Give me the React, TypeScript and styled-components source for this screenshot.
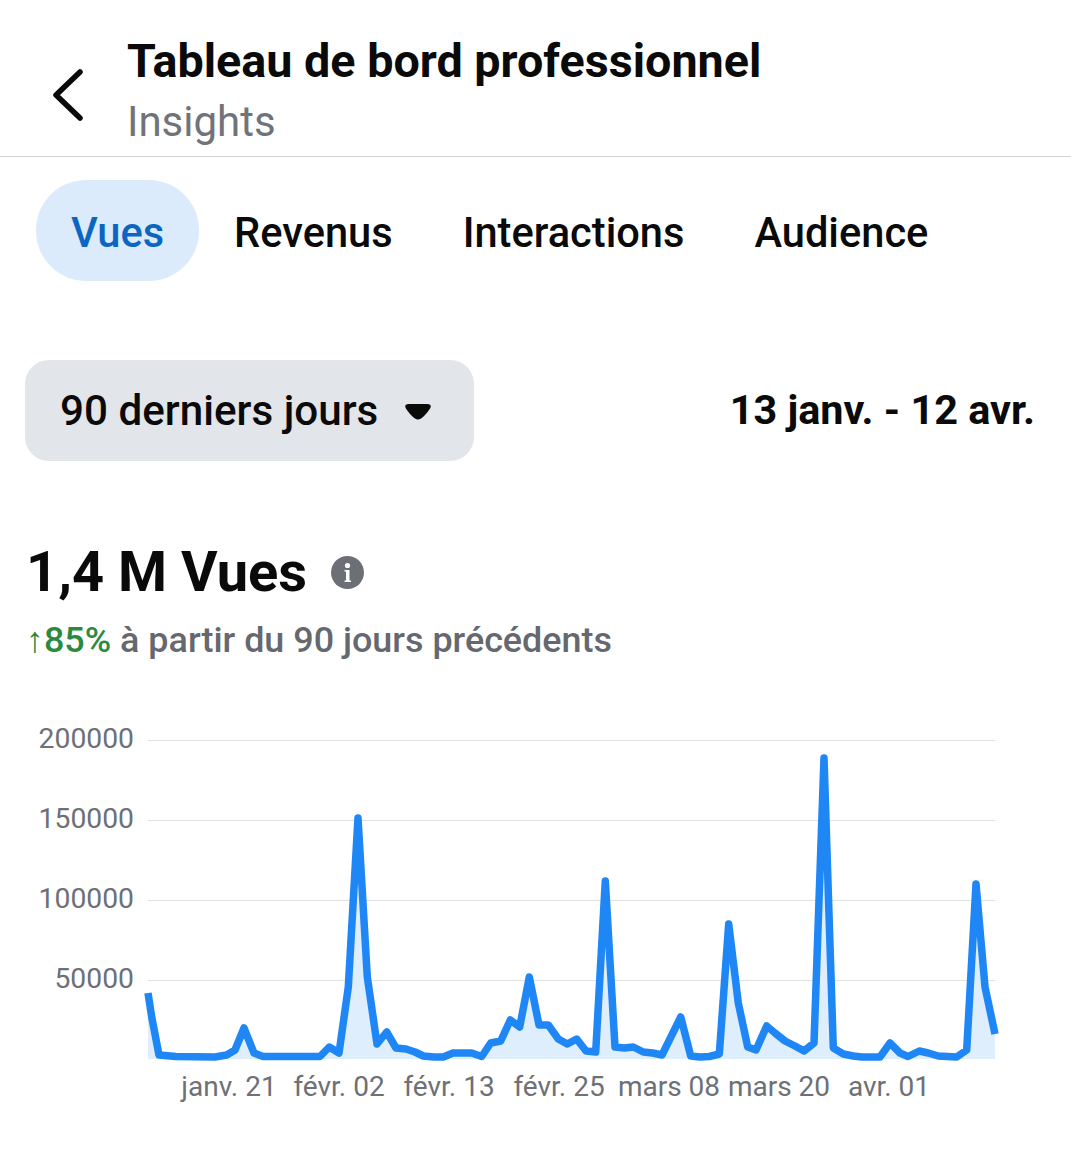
import styled, { createGlobalStyle } from "styled-components";

const GlobalStyle = createGlobalStyle`
  html, body {
    margin: 0;
    padding: 0;
    background: #fff;
    font-family: Roboto, "Liberation Sans", sans-serif;
    color: #0a0a0a;
  }
`;

const Page = styled.div`
  width: 1071px;
  height: 1166px;
  overflow: hidden;
  background: #fff;
`;

const Header = styled.header`
  height: 156px;
  border-bottom: 1px solid #d3d4d6;
  display: flex;
  align-items: flex-start;
  padding-left: 53px;
`;

const BackIcon = styled.svg`
  width: 30px;
  height: 52px;
  margin-top: 69px;
  margin-right: 44px;
  flex-shrink: 0;
`;

const HeaderText = styled.div`
  display: flex;
  flex-direction: column;
  padding-top: 33px;
`;

const Title = styled.h1`
  margin: 0;
  font-size: 46.7px;
  line-height: 57px;
  font-weight: 700;
  white-space: nowrap;
`;

const Subtitle = styled.div`
  font-size: 42px;
  line-height: 63px;
  color: #707379;
`;

const Tabs = styled.nav`
  display: flex;
  padding: 23px 0 0 36px;
`;

const Tab = styled.div<{ $active?: boolean }>`
  height: 101px;
  box-sizing: border-box;
  padding: 3px 35px 0;
  display: flex;
  align-items: center;
  border-radius: 50px;
  font-size: 41.6px;
  font-weight: 500;
  color: ${(props) => (props.$active ? "#0a66c2" : "#0a0a0a")};
  background: ${(props) => (props.$active ? "#dcebfb" : "transparent")};
`;

const FilterRow = styled.div`
  display: flex;
  align-items: center;
  justify-content: space-between;
  padding: 79px 36px 0 25px;
`;

const Dropdown = styled.div`
  width: 449px;
  height: 101px;
  box-sizing: border-box;
  padding-left: 35px;
  display: flex;
  align-items: center;
  gap: 26px;
  border-radius: 24px;
  background: #e2e5ea;
  font-size: 42.2px;
  font-weight: 500;
  white-space: nowrap;
`;

const Caret = styled.svg`
  width: 28px;
  height: 18px;
  margin-top: 3px;
  flex-shrink: 0;
`;

const DateRange = styled.div`
  font-size: 41.4px;
  font-weight: 700;
  margin-top: -2px;
  white-space: nowrap;
`;

const StatRow = styled.div`
  display: flex;
  align-items: center;
  gap: 24px;
  padding: 76px 0 0 26px;
`;

const StatValue = styled.div`
  font-size: 56px;
  line-height: 70px;
  font-weight: 700;
  white-space: nowrap;
`;

const InfoIcon = styled.svg`
  width: 33px;
  height: 33px;
`;

const Trend = styled.div`
  padding: 10px 0 0 26px;
  font-size: 35.9px;
  line-height: 46px;
  font-weight: 500;
  color: #65686e;
  white-space: nowrap;
`;

const TrendUp = styled.span`
  color: #2b8a3e;
`;

const Chart = styled.div`
  display: grid;
  grid-template-columns: 148px 847px;
  padding-top: 77px;
`;

const YAxis = styled.div`
  display: flex;
  flex-direction: column;
  align-items: flex-end;
  padding-right: 14px;
  margin-top: -21px;
`;

const YLabel = styled.div`
  height: 80px;
  line-height: 39px;
  font-size: 28.3px;
  color: #6d7075;
`;

const Plot = styled.svg`
  display: block;
  width: 847px;
  height: 320px;
  overflow: visible;
`;

const XAxis = styled.div`
  grid-column: 1 / 3;
  display: flex;
  padding: 8px 0 0 174px;
`;

const XLabel = styled.div`
  width: 110px;
  font-size: 28px;
  line-height: 38px;
  color: #6d7075;
  white-space: nowrap;
  display: flex;
  justify-content: center;
`;

const tabs = ["Vues", "Revenus", "Interactions", "Audience"];
const yLabels = ["200000", "150000", "100000", "50000"];
const xLabels = ["janv. 21", "févr. 02", "févr. 13", "févr. 25", "mars 08", "mars 20", "avr. 01"];
const gridLines = [740, 820, 900, 980];

// points read off the reference, in page coordinates (see viewBox below)
const points: [number, number][] = [
  [148, 993], [151.7, 1017], [159, 1055], [176, 1056.5], [215, 1057], [226.7, 1055], [235, 1050],
  [244, 1028], [254, 1053], [263, 1056.5], [320, 1056.5], [329.3, 1047], [339, 1053], [348.3, 987],
  [358, 818], [367.3, 977], [377, 1044], [386.7, 1032], [396, 1048], [406, 1049], [415, 1052],
  [423.3, 1056], [434, 1057], [443.3, 1057], [453, 1053], [461.7, 1053], [471.7, 1053], [481.7, 1056.5],
  [490.7, 1043], [500.7, 1041], [510.3, 1020], [519.7, 1027], [529.3, 977], [539, 1025], [548.3, 1025],
  [558.3, 1039], [567.3, 1044], [576.7, 1039], [586, 1051], [595.7, 1052], [605.3, 881], [615, 1047],
  [624.3, 1048], [633.3, 1047], [643.3, 1052], [652.7, 1053], [662, 1055], [680.7, 1017], [690.7, 1056],
  [700, 1057], [709.3, 1056.5], [719.3, 1054], [728.7, 924], [738.3, 1003], [747.7, 1047], [756, 1050],
  [766.7, 1026], [775, 1033], [785, 1041], [795, 1046], [804, 1051], [814, 1043], [824, 758],
  [833.3, 1048], [843.3, 1054], [853.3, 1056], [861.7, 1057], [880, 1057], [890, 1043], [900, 1053],
  [908, 1056.5], [919.3, 1051], [928.3, 1053], [938.3, 1056], [956.7, 1057], [966.7, 1050], [976, 884],
  [985, 987], [995, 1034],
];

const linePoints = points.map((p) => p.join(",")).join(" ");
const areaPoints = `148,1059 ${linePoints} 995,1059`;

function App() {
  return (
    <Page>
      <GlobalStyle />
      <Header>
        <BackIcon viewBox="0 0 30 52">
          <path
            d="M27 3 L3 26 L27 49"
            fill="none"
            stroke="#0a0a0a"
            strokeWidth="5.5"
            strokeLinecap="round"
            strokeLinejoin="round"
          />
        </BackIcon>
        <HeaderText>
          <Title>Tableau de bord professionnel</Title>
          <Subtitle>Insights</Subtitle>
        </HeaderText>
      </Header>

      <Tabs>
        {tabs.map((tab, i) => (
          <Tab key={tab} $active={i === 0}>
            {tab}
          </Tab>
        ))}
      </Tabs>

      <FilterRow>
        <Dropdown>
          90 derniers jours
          <Caret viewBox="0 0 28 18">
            <path
              d="M5 1 H23 Q28 1 26.4 5 Q22 12 17 15.5 Q14 17.5 11 15.5 Q6 12 1.6 5 Q0 1 5 1 Z"
              fill="#0a0a0a"
            />
          </Caret>
        </Dropdown>
        <DateRange>13 janv. - 12 avr.</DateRange>
      </FilterRow>

      <StatRow>
        <StatValue>1,4 M Vues</StatValue>
        <InfoIcon viewBox="0 0 33 33">
          <circle cx="16.5" cy="16.5" r="16.5" fill="#6c6f75" />
          <circle cx="16.5" cy="9.5" r="2.6" fill="#fff" />
          <path d="M13.5 14 H18.5 V24.5 H20 V26 H13.5 V24.5 H15 V15.5 H13.5 Z" fill="#fff" />
        </InfoIcon>
      </StatRow>
      <Trend>
        <TrendUp>↑85%</TrendUp> à partir du 90 jours précédents
      </Trend>

      <Chart>
        <YAxis>
          {yLabels.map((label) => (
            <YLabel key={label}>{label}</YLabel>
          ))}
        </YAxis>
        <Plot viewBox="148 740 847 320">
          {gridLines.map((y) => (
            <line key={y} x1="148" x2="995" y1={y + 0.5} y2={y + 0.5} stroke="#e0e0e2" strokeWidth="1" />
          ))}
          <polygon points={areaPoints} fill="#dfeefd" />
          <polyline
            points={linePoints}
            fill="none"
            stroke="#1f86f5"
            strokeWidth="7.5"
            strokeLinejoin="round"
          />
        </Plot>
        <XAxis>
          {xLabels.map((label) => (
            <XLabel key={label}>{label}</XLabel>
          ))}
        </XAxis>
      </Chart>
    </Page>
  );
}

export default App;
